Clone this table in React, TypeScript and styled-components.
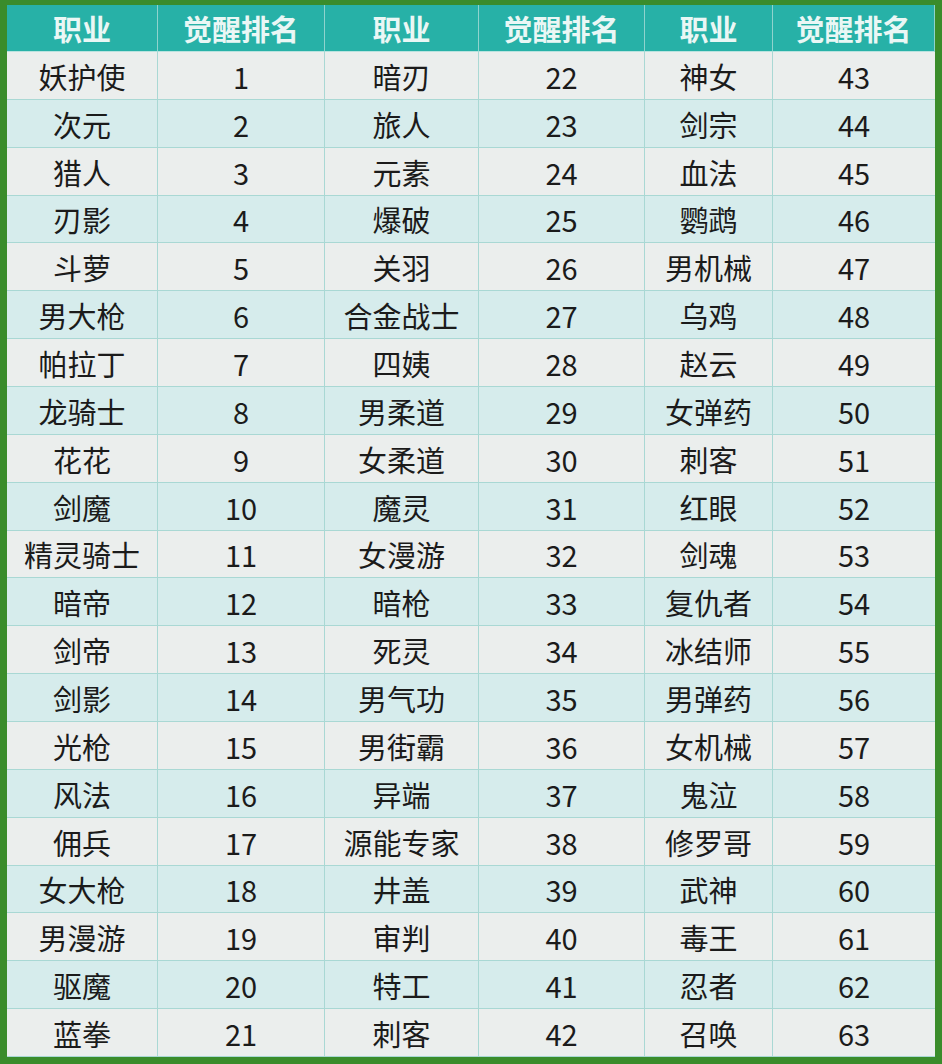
import React from "react";
import styled, { createGlobalStyle } from "styled-components";

const GlobalStyle = createGlobalStyle`
    html, body {
        margin: 0;
        padding: 0;
        background: #2f7a22;
    }
    * {
        box-sizing: border-box;
    }
`;

const Frame = styled.div`
    width: 942px;
    height: 1064px;
    background: #eaeeed;
    border-style: solid;
    border-color: #3a8c2b;
    border-width: 5px 7px 7px 7px;
    box-shadow: inset 0 0 0 1px #6fb05a;
`;

const Grid = styled.div`
    display: grid;
    width: 100%;
    height: 100%;
    grid-template-columns: 151px 167px 154px 166px 128px 162px;
    grid-template-rows: 47px repeat(21, 1fr);
    font-family: "Noto Sans CJK SC", "Noto Sans", sans-serif;
`;

const HeadCell = styled.div`
    display: flex;
    align-items: center;
    justify-content: center;
    background: #27b1a7;
    color: #eaf7f5;
    font-size: 29px;
    font-weight: 700;
    border-right: 1px solid #8fd3cd;
    border-bottom: 1px solid #b9e3df;
    &:last-child {
        border-right: none;
    }
`;

const Cell = styled.div<{ $alt: boolean; $last: boolean }>`
    display: flex;
    align-items: center;
    justify-content: center;
    background: ${(p) => (p.$alt ? "#d6ecec" : "#ebeeed")};
    color: #1b1b1b;
    font-size: 29px;
    padding-top: 1px;
    border-right: ${(p) => (p.$last ? "none" : "1px solid #a9d8d4")};
    border-bottom: 1px solid #a9d8d4;
    white-space: nowrap;
`;

const jobs: string[][] = [
    ["妖护使", "次元", "猎人", "刃影", "斗萝", "男大枪", "帕拉丁", "龙骑士", "花花", "剑魔", "精灵骑士", "暗帝", "剑帝", "剑影", "光枪", "风法", "佣兵", "女大枪", "男漫游", "驱魔", "蓝拳"],
    ["暗刃", "旅人", "元素", "爆破", "关羽", "合金战士", "四姨", "男柔道", "女柔道", "魔灵", "女漫游", "暗枪", "死灵", "男气功", "男街霸", "异端", "源能专家", "井盖", "审判", "特工", "刺客"],
    ["神女", "剑宗", "血法", "鹦鹉", "男机械", "乌鸡", "赵云", "女弹药", "刺客", "红眼", "剑魂", "复仇者", "冰结师", "男弹药", "女机械", "鬼泣", "修罗哥", "武神", "毒王", "忍者", "召唤"],
];

const headers = ["职业", "觉醒排名", "职业", "觉醒排名", "职业", "觉醒排名"];

export default function App() {
    const rows = Array.from({ length: 21 }, (_, i) => i);
    return (
        <>
            <GlobalStyle />
            <Frame>
                <Grid>
                    {headers.map((h, i) => (
                        <HeadCell key={"h" + i}>{h}</HeadCell>
                    ))}
                    {rows.map((r) =>
                        jobs.map((col, c) => (
                            <React.Fragment key={r + "-" + c}>
                                <Cell $alt={r % 2 === 1} $last={false}>
                                    {col[r]}
                                </Cell>
                                <Cell $alt={r % 2 === 1} $last={c === 2}>
                                    {c * 21 + r + 1}
                                </Cell>
                            </React.Fragment>
                        ))
                    )}
                </Grid>
            </Frame>
        </>
    );
}
